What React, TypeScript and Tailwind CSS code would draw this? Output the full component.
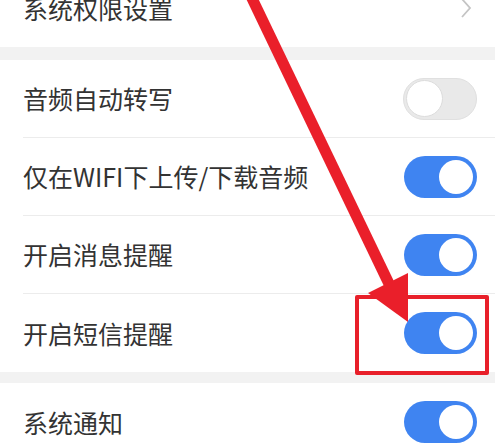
import React from "react";

function Toggle({ on }: { on: boolean }) {
  if (on) {
    return (
      <div className="w-[73px] h-[42px] rounded-full bg-[#3f84f1] flex items-center justify-end pr-[4px]">
        <div className="w-[34px] h-[34px] rounded-full bg-white" />
      </div>
    );
  }
  return (
    <div className="w-[74px] h-[42px] rounded-full bg-[#e9e9e9] border border-[#e0e0e0] flex items-center pl-[2px]">
      <div className="w-[37px] h-[37px] rounded-full bg-white border border-[#dcdcdc]" />
    </div>
  );
}

function Row({ label, children, divider }: { label: string; children?: React.ReactNode; divider?: boolean }) {
  return (
    <div className="h-[78px] pl-[23px] flex">
      <div className={"flex-1 flex items-center justify-between pr-[18px] " + (divider ? "border-b border-[#ececec]" : "")}>
        <span className="text-[25px] text-[#333333] leading-none">{label}</span>
        {children}
      </div>
    </div>
  );
}

export default function App() {
  return (
    <div
      className="relative w-[495px] h-[448px] overflow-hidden bg-white"
      style={{ fontFamily: '"Noto Sans CJK SC", "Noto Sans", sans-serif' }}
    >
      <div className="-mt-[31px]">
        <Row label="系统权限设置">
          <svg width="12" height="22" viewBox="0 0 12 22" className="mr-[5px]">
            <path d="M2 2 L10 11 L2 20" fill="none" stroke="#c4c4c4" strokeWidth="1.8" />
          </svg>
        </Row>
        <div className="h-[13px] bg-[#f2f2f2]" />
        <Row label="音频自动转写" divider>
          <Toggle on={false} />
        </Row>
        <Row label="仅在WIFI下上传/下载音频" divider>
          <Toggle on />
        </Row>
        <Row label="开启消息提醒" divider>
          <Toggle on />
        </Row>
        <Row label="开启短信提醒">
          <Toggle on />
        </Row>
        <div className="h-[11px] bg-[#f2f2f2]" />
        <Row label="系统通知">
          <Toggle on />
        </Row>
      </div>

      <div className="absolute left-[355px] top-[295px] w-[134px] h-[80px] border-[4px] border-[#e8202a] rounded-[2px]" />

      <svg className="absolute left-0 top-0" width="495" height="448" viewBox="0 0 495 448">
        <line x1="248" y1="-10" x2="392" y2="290" stroke="#ea1f2a" strokeWidth="11" />
        <polygon points="408,322 368,293 408,273" fill="#ea1f2a" />
      </svg>
    </div>
  );
}
